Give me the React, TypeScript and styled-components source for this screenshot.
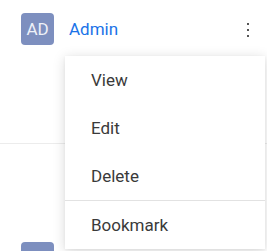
import React from 'react'
import styled, { createGlobalStyle } from 'styled-components'

const GlobalStyle = createGlobalStyle`
  html, body {
    margin: 0;
    padding: 0;
    background: #fff;
    font-family: Roboto, "Noto Sans", sans-serif;
    overflow: hidden;
  }
`

const Page = styled.div`
  position: relative;
  width: 267px;
  height: 251px;
  overflow: hidden;
`

const Row = styled.div<{ $top: number; $height?: number }>`
  display: flex;
  align-items: flex-start;
  gap: 15px;
  padding: ${({ $top }) => $top}px 12px 0 21px;
  height: ${({ $height }) => ($height ? `${$height}px` : 'auto')};
  box-sizing: border-box;
  border-bottom: 1px solid #ececec;
`

const Avatar = styled.div`
  width: 33px;
  height: 32px;
  border-radius: 4px;
  background: #7d8fbf;
  color: #eef1f8;
  font-size: 17px;
  line-height: 20px;
  display: flex;
  align-items: center;
  justify-content: center;
  flex-shrink: 0;
`

const Name = styled.a`
  flex: 1;
  color: #1a73e8;
  font-size: 17px;
  line-height: 32px;
  text-decoration: none;
`

const Kebab = styled.button`
  width: 8px;
  height: 32px;
  border: 0;
  padding: 0;
  background: none;
  display: flex;
  flex-direction: column;
  align-items: center;
  justify-content: center;
  gap: 4px;
  margin-top: 1px;
  margin-right: 3px;

  span {
    width: 2px;
    height: 2px;
    background: #555;
  }
`

const Menu = styled.ul`
  position: absolute;
  left: 65px;
  top: 56px;
  width: 200px;
  margin: 0;
  padding: 0;
  list-style: none;
  background: #fff;
  box-shadow: 0 2px 12px rgba(0, 0, 0, 0.15), 0 1px 3px rgba(0, 0, 0, 0.05);
`

const Item = styled.li<{ $divider?: boolean }>`
  height: 48px;
  display: flex;
  align-items: center;
  padding-left: 26px;
  font-size: 17px;
  color: #3a3a3a;
  border-top: ${({ $divider }) => ($divider ? '1px solid #e2e2e2' : 'none')};
`

const items = ['View', 'Edit', 'Delete']

export default function App() {
  return (
    <Page>
      <GlobalStyle />
      <Row $top={13} $height={144}>
        <Avatar>AD</Avatar>
        <Name href="#">Admin</Name>
        <Kebab aria-label="More">
          <span />
          <span />
          <span />
        </Kebab>
      </Row>
      <Row $top={98}>
        <Avatar aria-label="AD" />
      </Row>
      <Menu>
        {items.map((label) => (
          <Item key={label}>{label}</Item>
        ))}
        <Item $divider>Bookmark</Item>
      </Menu>
    </Page>
  )
}
